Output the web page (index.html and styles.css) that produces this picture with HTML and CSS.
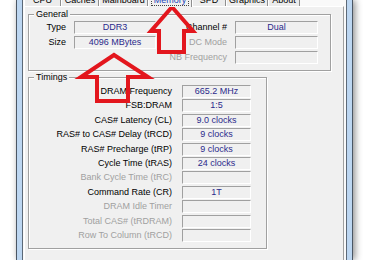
FILE: index.html
```html
<!DOCTYPE html>
<html>
<head>
<meta charset="utf-8">
<link rel="stylesheet" href="styles.css">
</head>
<body>
<div class="screen">
  <div class="window">
    <div class="client">
      <div class="tabs">
        <div class="tab w-cpu">CPU</div>
        <div class="tab w-caches">Caches</div>
        <div class="tab w-mb">Mainboard</div>
        <div class="tab sel w-mem"><span class="focus">Memory</span></div>
        <div class="tab w-spd">SPD</div>
        <div class="tab w-gfx">Graphics</div>
        <div class="tab w-about">About</div>
      </div>
      <div class="page">
        <div class="group general">
          <div class="legend">General</div>
          <div class="grid-general">
            <div class="lbl">Type</div><div class="fld">DDR3</div><div class="lbl">Channel #</div><div class="fld">Dual</div>
            <div class="lbl">Size</div><div class="fld">4096 MBytes</div><div class="lbl dis">DC Mode</div><div class="fld"></div>
            <div></div><div></div><div class="lbl dis">NB Frequency</div><div class="fld"></div>
          </div>
        </div>
        <div class="group timings">
          <div class="legend">Timings</div>
          <div class="grid-timings">
            <div class="lbl">DRAM Frequency</div><div class="fld">665.2 MHz</div>
            <div class="lbl">FSB:DRAM</div><div class="fld">1:5</div>
            <div class="lbl">CAS# Latency (CL)</div><div class="fld">9.0 clocks</div>
            <div class="lbl">RAS# to CAS# Delay (tRCD)</div><div class="fld">9 clocks</div>
            <div class="lbl">RAS# Precharge (tRP)</div><div class="fld">9 clocks</div>
            <div class="lbl">Cycle Time (tRAS)</div><div class="fld">24 clocks</div>
            <div class="lbl dis">Bank Cycle Time (tRC)</div><div class="fld"></div>
            <div class="lbl">Command Rate (CR)</div><div class="fld">1T</div>
            <div class="lbl dis">DRAM Idle Timer</div><div class="fld"></div>
            <div class="lbl dis">Total CAS# (tRDRAM)</div><div class="fld"></div>
            <div class="lbl dis">Row To Column (tRCD)</div><div class="fld"></div>
          </div>
        </div>
      </div>
    </div>
  </div>
  <svg class="arrows" width="370" height="260" viewBox="0 0 370 260">
    <polygon points="172,7 193,31 184,31 184,52 159,52 159,31 151,31" />
    <polygon points="114,55 148,77 128,77 128,101 97,101 97,77 81,77" />
  </svg>
</div>
</body>
</html>
```
FILE: styles.css
```css
* { box-sizing: border-box; }
body {
  margin: 0;
  font-family: "Liberation Sans", Arial, sans-serif;
  font-size: 9px;
  color: #000;
}
.screen {
  width: 370px;
  height: 260px;
  overflow: hidden;
  position: relative;
  background: #fff;
}
.window {
  margin-left: 16px;
  width: 337px;
  height: 260px;
  border-left: 1px solid #4a5664;
  border-right: 1px solid #4a5664;
  background: #bcd6f1;
  padding: 0 5px;
  box-shadow: 2px 0 7px rgba(0, 0, 0, 0.45);
}
.client {
  height: 100%;
  background: #f9f9f9;
  border-left: 1px solid #5c6977;
  border-right: 1px solid #5c6977;
  padding: 0 2px 0 1px;
}
.tabs {
  display: flex;
  align-items: flex-end;
  height: 6px;
}
.tab {
  height: 11px;
  line-height: 11px;
  text-align: center;
  border-left: 1px solid #fff;
  border-right: 1px solid #8f8f8f;
  background: #ececec;
  white-space: nowrap;
}
.tab.sel {
  height: 14px;
  padding-top: 2px;
  margin-bottom: -1px;
  position: relative;
  z-index: 1;
  background: #f0f0f0;
  color: #2244b8;
}
.focus {
  outline: 1px dotted #444;
  outline-offset: 0;
  padding: 0 2px;
}
.w-cpu { width: 37px; }
.w-caches { width: 38px; }
.w-mb { width: 49px; }
.w-mem { width: 44px; }
.w-spd { width: 34px; }
.w-gfx { width: 42px; }
.w-about { width: 32px; }

.page {
  height: 260px;
  background: #f0f0f0;
  border-top: 1px solid #fff;
  border-left: 1px solid #fff;
  border-right: 1px solid #a0a0a0;
  padding: 7px 0 0 3px;
  display: flex;
  flex-direction: column;
  align-items: flex-start;
  gap: 6px;
}
.group {
  position: relative;
  border: 1px solid #a0a0a0;
  box-shadow: inset 1px 1px 0 #fff, 1px 1px 0 #fff;
}
.legend {
  position: absolute;
  top: -6px;
  left: 5px;
  padding: 0 2px;
  line-height: 11px;
  background: #f0f0f0;
}
.general {
  width: 303px;
  padding: 6px 12px 6px 0;
}
.grid-general {
  display: grid;
  grid-template-columns: 37px 82px 63px 83px;
  grid-auto-rows: 13px;
  column-gap: 8px;
  row-gap: 2px;
}
.timings {
  width: 239px;
  padding: 7px 15px 6px 0;
}
.grid-timings {
  display: grid;
  grid-template-columns: 143px 69px;
  grid-auto-rows: 13px;
  column-gap: 10px;
  row-gap: 1.4px;
}
.lbl {
  text-align: right;
  line-height: 13px;
  white-space: nowrap;
}
.lbl.dis { color: #a0a0a0; }
.fld {
  border: 1px solid;
  border-color: #a0a0a0 #fff #fff #a0a0a0;
  background: #f0f0f0;
  color: #2b2b8c;
  text-align: center;
  line-height: 11px;
  white-space: nowrap;
}
.arrows {
  position: absolute;
  left: 0;
  top: 0;
  pointer-events: none;
}
.arrows polygon {
  fill: none;
  stroke: #e3161d;
  stroke-width: 4;
  stroke-linejoin: miter;
}
```
